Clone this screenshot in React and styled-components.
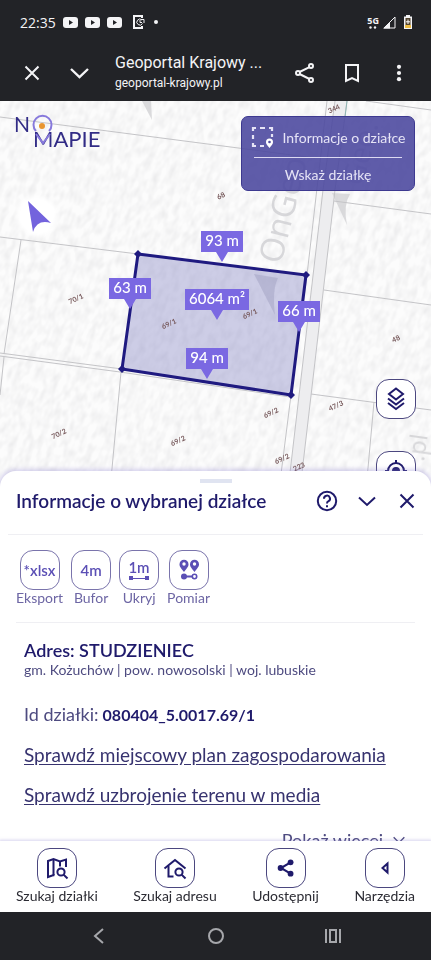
import React from 'react';
import styled, { createGlobalStyle } from 'styled-components';

const GlobalStyle = createGlobalStyle`
  :root {
    --navy: #1f1a6b;
    --violet: #5b4fb5;
    --chrome: #222327;
  }
  * {
    box-sizing: border-box;
  }
  body {
    margin: 0;
    font-family: Lato, 'Liberation Sans', sans-serif;
    color: var(--navy);
  }
  button {
    margin: 0;
    padding: 0;
    border: 0;
    background: none;
    font: inherit;
    color: inherit;
    cursor: pointer;
  }
  svg {
    display: block;
    flex: none;
  }
`;

const Screen = styled.div`
  height: 100vh;
  display: flex;
  flex-direction: column;
  background: #fff;
`;

const StatusBar = styled.div`
  flex: none;
  display: flex;
  align-items: center;
  justify-content: space-between;
  height: 44px;
  padding: 0 17px 0 20px;
  background: var(--chrome);
  color: #f4f4f6;
  font-family: 'Open Sans', 'Noto Sans', sans-serif;
  font-size: 14px;
`;

const StatusGroup = styled.div`
  display: flex;
  align-items: center;
  gap: ${({ $gap }) => $gap}px;
`;

const Network = styled.div`
  display: flex;
  flex-direction: column;
  align-items: center;
  font-size: 9px;
  font-weight: 700;
  line-height: 10px;
`;

const BrowserBar = styled.header`
  flex: none;
  display: flex;
  align-items: center;
  height: 57px;
  padding: 0 20px;
  background: var(--chrome);
  color: #f4f4f6;
  font-family: Roboto, sans-serif;
`;

const BrowserActions = styled.div`
  display: flex;
  gap: 23px;
`;

const BrowserButton = styled.button`
  display: grid;
  place-items: center;
  width: 24px;
  height: 24px;
`;

const PageInfo = styled.div`
  flex: 1;
  min-width: 0;
  padding-left: 24px;
  line-height: 20px;
  p {
    margin: 0;
    font-size: 16px;
    white-space: nowrap;
  }
  small {
    display: block;
    font-size: 12px;
  }
`;

const Content = styled.main`
  flex: 1;
  min-height: 0;
  display: grid;
  grid-template-rows: 1fr 1fr;
`;

/* runs a little under the sheet so its rounded corners show the map */
const MapArea = styled.section`
  position: relative;
  min-height: 0;
  margin-bottom: -16px;
  overflow: hidden;
  background: #f8f8f8;
  > svg {
    width: 100%;
    height: 100%;
  }
`;

const Logo = styled.a`
  position: absolute;
  top: 8px;
  left: 12px;
`;

const InfoPanel = styled.div`
  position: absolute;
  top: 15px;
  right: 16px;
  width: 174px;
  padding: 0 8px;
  border: 1px solid #3d3990;
  border-radius: 7px;
  background: rgba(78, 74, 160, 0.9);
  color: #e6e4f6;
  font-size: 14px;
`;

const PanelButton = styled.button`
  display: flex;
  align-items: center;
  justify-content: center;
  gap: 8px;
  width: 100%;
  height: ${({ $height }) => $height}px;
  white-space: nowrap;
`;

const PanelDivider = styled.hr`
  height: 1px;
  margin: 0 4px;
  border: 0;
  background: #dddaf2;
`;

const MapControls = styled.div`
  position: absolute;
  right: 15px;
  bottom: -4px;
  display: flex;
  flex-direction: column;
  gap: 32px;
`;

const SquareIcon = styled.span`
  display: grid;
  place-items: center;
  width: 40px;
  height: 40px;
  border: 1px solid ${({ $soft }) => ($soft ? '#7a74ac' : '#4b477f')};
  border-radius: 13px;
  background: #fff;
`;

const Sheet = styled.section`
  position: relative;
  min-height: 0;
  padding-top: 8px;
  overflow: hidden;
  border-radius: 16px 16px 0 0;
  background: #fff;
  box-shadow: 0 0 4px 2px rgba(140, 130, 205, 0.35);
`;

const Handle = styled.div`
  width: 32px;
  height: 4px;
  margin: 0 auto;
  background: #e0e4f1;
`;

const SheetHeader = styled.header`
  display: flex;
  align-items: center;
  justify-content: space-between;
  height: 52px;
  margin: 0 8px;
  padding: 0 4px 16px 8px;
  border-bottom: 1px solid #efeff3;
  h1 {
    margin: 0;
    font-size: 19px;
    font-weight: 600;
  }
`;

const HeaderActions = styled.div`
  display: flex;
  gap: 16px;
  button {
    display: grid;
    place-items: center;
    width: 24px;
    height: 24px;
  }
`;

const Tools = styled.div`
  display: flex;
  gap: 8px;
  height: 88px;
  margin: 0 16px;
  padding-top: 15px;
  border-bottom: 1px solid #efeff3;
`;

const ToolButton = styled.button`
  display: flex;
  flex-direction: column;
  align-items: center;
  height: 56px;
  color: #6d66a4;
  font-size: 14px;
  line-height: 16px;
  b {
    color: var(--violet);
    font-size: 15px;
    font-weight: 600;
  }
`;

const Details = styled.div`
  padding: 15px 24px 0;
  h2 {
    margin: 0;
    font-size: 18px;
    font-weight: 600;
    line-height: 24px;
  }
  p {
    margin: 0;
  }
`;

const Region = styled.p`
  color: #4e4b80;
  font-size: 14px;
  line-height: 16px;
`;

const ParcelId = styled.p`
  padding-top: 16px;
  font-size: 16px;
  line-height: 40px;
  span {
    color: #4e4b80;
    font-size: 18px;
  }
`;

const DetailLink = styled.a`
  display: block;
  color: #37336f;
  font-size: 19px;
  line-height: 40px;
  text-decoration: underline;
  text-underline-offset: 2px;
  white-space: nowrap;
`;

const MoreButton = styled.button`
  display: flex;
  align-items: center;
  gap: 8px;
  margin: 13px 0 0 auto;
  color: #4e4b80;
  font-size: 18px;
  line-height: 24px;
`;

const TabBar = styled.nav`
  position: relative;
  flex: none;
  display: flex;
  justify-content: space-between;
  height: 71px;
  padding: 7px 16px 0;
  background: #fff;
  box-shadow: 0 0 3px 1px rgba(140, 130, 205, 0.35);
`;

const Tab = styled.button`
  display: flex;
  flex-direction: column;
  align-items: center;
  height: 56px;
  color: #2b2b33;
  font-size: 14px;
  line-height: 16px;
  svg {
    color: var(--navy);
  }
`;

const SystemNav = styled.nav`
  position: relative;
  flex: none;
  display: grid;
  grid-template-columns: repeat(3, 1fr);
  place-items: center;
  height: 48px;
  padding: 0 40px;
  background: var(--chrome);
  color: #a6a7ab;
`;

const Icon = ({ size = 24, width = 2, children }) => (
  <svg
    width={size}
    height={size}
    viewBox="0 0 24 24"
    fill="none"
    stroke="currentColor"
    strokeWidth={width}
    aria-hidden="true"
  >
    {children}
  </svg>
);

const boundaries = [
  'M0 117 L315 158',
  'M366 101 L431 110',
  'M0 237 L138 254',
  'M21 240 L4 354',
  'M0 353 L122 369',
  'M0 356 L120 372 L290 397',
  'M4 357 L0 395',
  'M121 372 L110 490',
  'M327 101 L307 275 L291 395 L279 490',
  'M335 101 L323 190 L288 490',
  'M347 101 L335 190 L300 490',
  'M334 201 L431 214',
  'M324 290 L431 305',
  'M311 394 L431 410',
  'M374 402 L366 490',
];

const plots = [
  { x: 335, y: 111, name: '344' },
  { x: 222, y: 198, name: '68' },
  { x: 77, y: 301, name: '70/1' },
  { x: 170, y: 326, name: '69/1' },
  { x: 251, y: 316, name: '69/1' },
  { x: 397, y: 341, name: '48' },
  { x: 337, y: 408, name: '47/3' },
  { x: 272, y: 415, name: '69/2' },
  { x: 60, y: 436, name: '70/2' },
  { x: 179, y: 443, name: '69/2' },
  { x: 283, y: 461, name: '69/2' },
  { x: 300, y: 469, name: '223' },
];

const measures = [
  { x: 222, y: 231, width: 42, text: '93 m' },
  { x: 130, y: 278, width: 42, text: '63 m' },
  { x: 217, y: 289, width: 64, text: '6064 m²' },
  { x: 299, y: 301, width: 42, text: '66 m' },
  { x: 207, y: 348, width: 42, text: '94 m' },
];

const corners = [
  [138, 254],
  [306, 275],
  [291, 395],
  [122, 369],
];

const ParcelMap = () => (
  <svg viewBox="0 101 431 386" preserveAspectRatio="xMidYMin slice">
    <defs>
      <filter id="relief" x="0" y="0" width="100%" height="100%">
        <feTurbulence type="fractalNoise" baseFrequency="0.16 0.09" numOctaves="2" seed="4" />
        <feColorMatrix values="0 0 0 0 0.6  0 0 0 0 0.6  0 0 0 0 0.62  0.6 0 0 0 -0.21" />
      </filter>
      <filter id="halo" x="-30%" y="-30%" width="160%" height="160%">
        <feGaussianBlur stdDeviation="2" />
      </filter>
    </defs>
    <rect y="101" width="431" height="386" fill="#fcfcfc" />
    <rect x="-110" y="0" width="660" height="600" filter="url(#relief)" transform="rotate(20 215 290)" />
    <path d="M335 190 L347 101 L335 101 L323 190 L288 490 L300 490 Z" fill="#ededef" />
    <g fill="#d2d2d5" opacity="0.8">
      <path d="M142 101 L152 120 L151 101 Z" />
      <path d="M332 193 L347 225 Q343 205 350 194 Z" />
    </g>
    <g fill="#cfcfd2" fontFamily="'Open Sans', sans-serif" opacity="0.8">
      <text fontSize="33" transform="translate(281 265) rotate(-76)">
        OnGeo
      </text>
      <text fontSize="30" transform="translate(363 187) rotate(-76)">
        Geo.
      </text>
      <text fontSize="24" transform="translate(424 462) rotate(-82)">
        .pl
      </text>
    </g>
    <g fill="none" stroke="#c4c4c7">
      {boundaries.map((d) => (
        <path key={d} d={d} />
      ))}
    </g>
    <path d="M347 101 L345 117" stroke="#8fb5b4" />
    <polygon points={corners.join(' ')} fill="rgba(130, 128, 195, 0.38)" />
    <path d="M254 274 L275 315 Q272 290 278 278 Z" fill="#a9a8c8" opacity="0.6" />
    <g fill="#76585a" fontSize="7" fontWeight="700" textAnchor="middle">
      {plots.map(({ x, y, name }) => (
        <text key={`${x}-${y}`} transform={`translate(${x} ${y}) rotate(-25)`}>
          {name}
        </text>
      ))}
    </g>
    <polygon points={corners.join(' ')} fill="none" stroke="#1f1a80" strokeWidth="3" />
    {corners.map(([x, y]) => (
      <path key={x} d={`M${x} ${y - 4} l4 4 -4 4 -4 -4z`} fill="#1f1a80" />
    ))}
    <circle cx="37" cy="216" r="20" fill="#fff" filter="url(#halo)" />
    <path d="M28 201 L51 223 Q37 219 33 232 Z" fill="#7363dd" />
    {measures.map(({ x, y, width, text }) => (
      <g key={text}>
        <path
          d={`M${x - width / 2} ${y} h${width} v21 h${-(width / 2 - 6)} l-6 10 -6 -10 h${-(width / 2 - 6)}z`}
          fill="#7a68e2"
        />
        <text x={x} y={y + 15} fill="#fff" fontSize="15" fontWeight="500" textAnchor="middle">
          {text}
        </text>
      </g>
    ))}
  </svg>
);

const LogoMark = () => (
  <svg width="100" height="44" viewBox="0 0 100 44" role="img" aria-label="No mapie">
    <g fill="#322c86" fontSize="21">
      <text x="2" y="23">
        N
      </text>
      <text x="21" y="38" fontSize="22">
        MAPIE
      </text>
    </g>
    <path d="M24 22 A9 9 0 1 1 37 22" fill="none" stroke="#8779dc" strokeWidth="2" />
    <path d="M24 25 L31 34 L38 25" fill="none" stroke="#8779dc" strokeWidth="2" />
    <circle cx="30" cy="17" r="3" fill="#e8952f" />
  </svg>
);

const YouTube = () => (
  <svg width="15" height="11" viewBox="0 0 15 11" aria-hidden="true">
    <rect width="15" height="11" rx="3" fill="#f4f4f6" />
    <path d="M6 3 L10 5.5 L6 8 Z" fill="#222327" />
  </svg>
);

const magnifier = (
  <>
    <circle cx="16" cy="16" r="3.6" />
    <path d="M18.6 18.6 L22.5 22.5" />
  </>
);

const tabs = [
  {
    label: 'Szukaj działki',
    icon: (
      <Icon>
        <path d="M9.5 19.5 L8.5 19 L3 21 V5 L8.5 3 L15 5.4 L21 3.5 V11" />
        <path d="M8.5 3 V19 M15 5.4 V10.5" />
        {magnifier}
      </Icon>
    ),
  },
  {
    label: 'Szukaj adresu',
    icon: (
      <Icon>
        <path d="M1.5 12.5 L12 4 L22.5 12.5" />
        <path d="M5.5 10 V20.5 H10.5" />
        {magnifier}
      </Icon>
    ),
  },
  {
    label: 'Udostępnij',
    icon: (
      <Icon size={20} width={2.5}>
        <path d="M17 5.5 L6 12 L17 18.5" />
        <g fill="currentColor" stroke="none">
          <circle cx="17.5" cy="5.2" r="3.5" />
          <circle cx="5.5" cy="12" r="3.5" />
          <circle cx="17.5" cy="18.8" r="3.5" />
        </g>
      </Icon>
    ),
  },
  {
    label: 'Narzędzia',
    icon: (
      <Icon>
        <path d="M14.5 7.5 V16.5 L9.5 12 Z" />
      </Icon>
    ),
  },
];

const tools = [
  { label: 'Eksport', icon: <b>*xlsx</b> },
  { label: 'Bufor', icon: <b>4m</b> },
  {
    label: 'Ukryj',
    icon: (
      <svg width="28" height="28" viewBox="0 0 28 28" fill="#5b4fb5">
        <text x="14" y="17" fontSize="15" fontWeight="600" textAnchor="middle">
          1m
        </text>
        <path d="M4 22 H24 V23 H4 Z M4 20 h4 v4 h-4z M20 20 h4 v4 h-4z" />
      </svg>
    ),
  },
  {
    label: 'Pomiar',
    icon: (
      <svg width="24" height="24" viewBox="0 0 24 24" fill="#5b4fb5">
        <path d="M7 14 C3 9 2.5 8 2.5 6.2 A4.5 4.5 0 0 1 11.5 6.2 C11.5 8 11 9 7 14Z M17.5 14 C13.5 9 13 8 13 6.2 A4.5 4.5 0 0 1 22 6.2 C22 8 21.5 9 17.5 14Z" />
        <circle cx="7" cy="6" r="1.7" fill="#fff" />
        <circle cx="17.5" cy="6" r="1.7" fill="#fff" />
        <circle cx="7" cy="18.5" r="3" />
        <path d="M7 18.5 H15" stroke="#5b4fb5" strokeWidth="2" />
        <circle cx="17.5" cy="18.5" r="2.2" fill="#fff" stroke="#5b4fb5" strokeWidth="1.6" />
      </svg>
    ),
  },
];

const App = () => (
  <Screen>
    <GlobalStyle />
    <StatusBar>
      <StatusGroup $gap={7}>
        <span>22:35</span>
        <YouTube />
        <YouTube />
        <YouTube />
        <svg width="30" height="14" viewBox="0 0 30 14" fill="none" stroke="#f4f4f6">
          <path d="M13 3 V1 H5 V13 H13 V11" strokeWidth="2" />
          <path d="M13 5 A3 3 0 1 0 13.500 8.500 M11 5 V7.500 H13 M12 4.500 H15 V8" />
          <circle cx="27" cy="7" r="2" fill="#f4f4f6" stroke="none" />
        </svg>
      </StatusGroup>
      <StatusGroup $gap={4}>
        <Network>
          5G
          <svg width="8" height="3" viewBox="0 0 8 3" fill="#f4f4f6">
            <circle cx="1.5" cy="1.5" r="1.2" />
            <circle cx="6" cy="1.5" r="1.2" />
          </svg>
        </Network>
        <svg width="13" height="13" viewBox="0 0 13 13">
          <path d="M1 12 H12 V1 Z" fill="none" stroke="#f4f4f6" />
          <path d="M0 12.5 H7 V6 Z" fill="#f4f4f6" />
        </svg>
        <svg width="14" height="14" viewBox="0 0 14 14">
          <path d="M4 1.5 H6 V0 H10 V1.5 H12 V14 H4 Z" fill="#f4f4f6" />
          <path d="M5.5 3 H10.5 V10 H5.5 Z" fill="#54452f" />
          <path d="M5 10 H11 V13 H5 Z" fill="#edbd45" />
          <path d="M8 4.5 V9 M6 6.8 H10" stroke="#fff" />
        </svg>
      </StatusGroup>
    </StatusBar>

    <BrowserBar>
      <BrowserActions>
        <BrowserButton type="button" aria-label="Zamknij kartę">
          <Icon>
            <path d="M5.5 5.5 L18.5 18.5 M18.5 5.5 L5.5 18.5" />
          </Icon>
        </BrowserButton>
        <BrowserButton type="button" aria-label="Zwiń kartę">
          <Icon width={2.4}>
            <path d="M4 8 L12.5 16 L21 8" />
          </Icon>
        </BrowserButton>
      </BrowserActions>
      <PageInfo>
        <p>Geoportal Krajowy ...</p>
        <small>geoportal-krajowy.pl</small>
      </PageInfo>
      <BrowserActions>
        <BrowserButton type="button" aria-label="Udostępnij stronę">
          <Icon>
            <path d="M16.5 6.2 L6.5 11 M6.5 13 L16.5 18" />
            <circle cx="18" cy="5" r="2" />
            <circle cx="5" cy="12" r="2" />
            <circle cx="18" cy="19" r="2" />
          </Icon>
        </BrowserButton>
        <BrowserButton type="button" aria-label="Dodaj zakładkę">
          <Icon>
            <path d="M6 4 H18 V20 L12 17 L6 20 Z" />
          </Icon>
        </BrowserButton>
        <BrowserButton type="button" aria-label="Menu">
          <Icon>
            <g fill="currentColor" stroke="none">
              <circle cx="12" cy="5.8" r="2.1" />
              <circle cx="12" cy="12" r="2.1" />
              <circle cx="12" cy="18.2" r="2.1" />
            </g>
          </Icon>
        </BrowserButton>
      </BrowserActions>
    </BrowserBar>

    <Content>
      <MapArea>
        <ParcelMap />
        <Logo href="/">
          <LogoMark />
        </Logo>
        <InfoPanel>
          <PanelButton type="button" $height={40}>
            <Icon width={2.2}>
              <path d="M2 6 V3 H5 M9 3 H14 M18 3 H21 V6 M21 9 V12 M2 10 V14 M2 18 V21 H5 M9 21 H13" />
              <path
                d="M18.5 23 C15.5 19.5 15 18.5 15 17 A3.5 3.5 0 0 1 22 17 C22 18.5 21.5 19.5 18.5 23Z"
                fill="#fff"
                stroke="none"
              />
              <circle cx="18.5" cy="17" r="1.3" fill="#4e4aa0" stroke="none" />
            </Icon>
            Informacje o działce
          </PanelButton>
          <PanelDivider />
          <PanelButton type="button" $height={32}>
            Wskaż działkę
          </PanelButton>
        </InfoPanel>
        <MapControls>
          <button type="button" aria-label="Warstwy">
            <SquareIcon>
              <Icon>
                <path d="M12 1.500 L19 7 L12 12.500 L5 7 Z M4 11.500 L12 17.500 L20 11.500 M4 16 L12 22 L20 16" />
              </Icon>
            </SquareIcon>
          </button>
          <button type="button" aria-label="Moja lokalizacja">
            <SquareIcon>
              <Icon>
                <circle cx="12" cy="12" r="8" />
                <circle cx="12" cy="12" r="4" fill="currentColor" stroke="none" />
                <path d="M12 1 V4 M12 20 V23 M1 12 H4 M20 12 H23" />
              </Icon>
            </SquareIcon>
          </button>
        </MapControls>
      </MapArea>

      <Sheet>
        <Handle />
        <SheetHeader>
          <h1>Informacje o wybranej działce</h1>
          <HeaderActions>
            <button type="button" aria-label="Pomoc">
              <Icon>
                <circle cx="12" cy="12" r="9.2" />
                <path d="M9 9.8 A3 3 0 1 1 13.5 12.2 Q12 13 12 14.5 M12 16.2 V18.2" />
              </Icon>
            </button>
            <button type="button" aria-label="Zwiń">
              <Icon>
                <path d="M4 8.5 L12 16 L20 8.5" />
              </Icon>
            </button>
            <button type="button" aria-label="Zamknij">
              <Icon>
                <path d="M5.5 5.5 L18.5 18.5 M18.5 5.5 L5.5 18.5" />
              </Icon>
            </button>
          </HeaderActions>
        </SheetHeader>
        <Tools>
          {tools.map(({ label, icon }) => (
            <ToolButton key={label} type="button">
              <SquareIcon $soft>{icon}</SquareIcon>
              {label}
            </ToolButton>
          ))}
        </Tools>
        <Details>
          <h2>Adres: STUDZIENIEC</h2>
          <Region>gm. Kożuchów | pow. nowosolski | woj. lubuskie</Region>
          <ParcelId>
            <span>Id działki:</span> <strong>080404_5.0017.69/1</strong>
          </ParcelId>
          <DetailLink href="#plan">Sprawdź miejscowy plan zagospodarowania</DetailLink>
          <DetailLink href="#media">Sprawdź uzbrojenie terenu w media</DetailLink>
          <MoreButton type="button">
            Pokaż więcej
            <Icon size={16}>
              <path d="M4 8 L12 16 L20 8" />
            </Icon>
          </MoreButton>
        </Details>
      </Sheet>
    </Content>

    <TabBar>
      {tabs.map(({ label, icon }) => (
        <Tab key={label} type="button">
          <SquareIcon>{icon}</SquareIcon>
          {label}
        </Tab>
      ))}
    </TabBar>

    <SystemNav>
      <button type="button" aria-label="Wstecz">
        <Icon>
          <path d="M16 5 L8 12 L16 19" />
        </Icon>
      </button>
      <button type="button" aria-label="Ekran główny">
        <Icon>
          <circle cx="12" cy="12" r="7" />
        </Icon>
      </button>
      <button type="button" aria-label="Ostatnie aplikacje">
        <Icon>
          <path d="M5 5 V19 M9 6 H15 V18 H9 Z M19 5 V19" />
        </Icon>
      </button>
    </SystemNav>
  </Screen>
);

export default App;
